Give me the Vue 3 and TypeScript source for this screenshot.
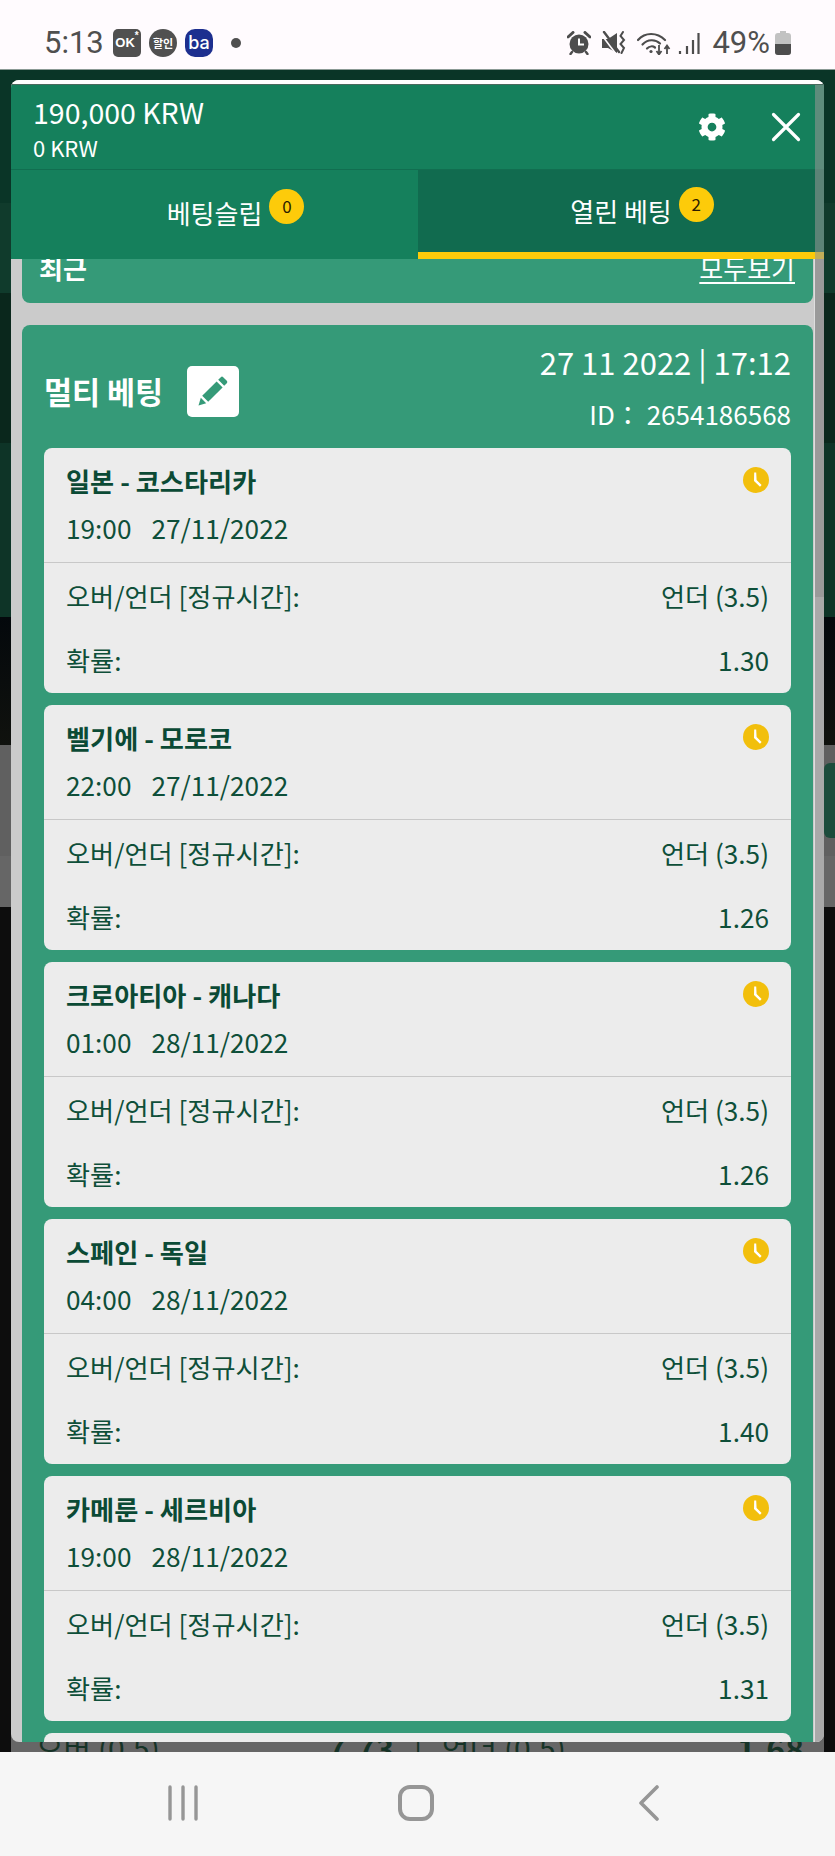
<script setup lang="ts">
interface Bet {
  match: string
  time: string
  date: string
  odds: string
}

const bets: Bet[] = [
  { match: '일본 - 코스타리카', time: '19:00', date: '27/11/2022', odds: '1.30' },
  { match: '벨기에 - 모로코', time: '22:00', date: '27/11/2022', odds: '1.26' },
  { match: '크로아티아 - 캐나다', time: '01:00', date: '28/11/2022', odds: '1.26' },
  { match: '스페인 - 독일', time: '04:00', date: '28/11/2022', odds: '1.40' },
  { match: '카메룬 - 세르비아', time: '19:00', date: '28/11/2022', odds: '1.31' },
]
</script>

<template>
  <div class="phone">
    <header class="statusbar">
      <div class="status-left">
        <span class="clock-text">5:13</span>
        <span class="app app-ok">OK<sup>*</sup></span>
        <span class="app app-sale">할인</span>
        <span class="app app-ba">ba</span>
        <span class="dot"></span>
      </div>
      <div class="status-right">
        <svg class="ic" width="24" height="24" viewBox="0 0 24 24">
          <circle cx="12" cy="13" r="9.5" fill="#4d4d4d" />
          <path d="M1 6 L6 1.5 M23 6 L18 1.5" stroke="#4d4d4d" stroke-width="3" stroke-linecap="round" />
          <path d="M5 21 L3.5 23 M19 21 L20.5 23" stroke="#4d4d4d" stroke-width="2.4" stroke-linecap="round" />
          <path d="M12 7.5 V13.5 H17" stroke="#fff" stroke-width="2" fill="none" />
        </svg>
        <svg class="ic ic-mute" width="24" height="24" viewBox="0 0 24 24">
          <path d="M0 8 H6 L15 2 V22 L6 17 H0 Z" fill="#4d4d4d" />
          <path d="M0 4.5 L14 23" stroke="#fffbfe" stroke-width="1.6" />
          <path d="M2 1 L17 21" stroke="#4d4d4d" stroke-width="2.4" stroke-linecap="round" />
          <path d="M21 1 L18.5 5 L22 9 L18.5 13 L22 17 L19.5 22" stroke="#4d4d4d" stroke-width="2" fill="none" stroke-linecap="round" />
        </svg>
        <svg class="ic ic-wifi" width="34" height="24" viewBox="0 0 34 24">
          <path d="M1 9 C8 1 20 1 28 9" stroke="#4d4d4d" stroke-width="2.2" fill="none" stroke-linecap="round" />
          <path d="M5.5 13.5 C10.5 8 18.5 8 23 12.5" stroke="#4d4d4d" stroke-width="2.2" fill="none" stroke-linecap="round" />
          <path d="M10 17.5 C12.5 15 16 15 18 16.5" stroke="#4d4d4d" stroke-width="2.2" fill="none" stroke-linecap="round" />
          <circle cx="14" cy="20.5" r="1.6" fill="#4d4d4d" />
          <path d="M22 14 V23 M19.5 20 L22 23.5 L24.5 20" stroke="#4d4d4d" stroke-width="1.8" fill="none" />
          <path d="M30 23 V15 M27.5 18 L30 14.5 L32.5 18" stroke="#4d4d4d" stroke-width="1.8" fill="none" />
        </svg>
        <svg class="ic ic-signal" width="22" height="24" viewBox="0 0 22 24">
          <path d="M2 20 V23 M9 15 V23 M15 9 V23 M20.5 2 V23" stroke="#4d4d4d" stroke-width="2.2" />
        </svg>
        <span class="battery-text">49%</span>
        <svg class="ic ic-battery" width="16" height="24" viewBox="0 0 16 24">
          <path d="M5 0 H11 V2 H13 Q16 2 16 5 V21 Q16 24 13 24 H3 Q0 24 0 21 V5 Q0 2 3 2 H5 Z" fill="#c2c2c2" />
          <path d="M0 13 H16 V21 Q16 24 13 24 H3 Q0 24 0 21 Z" fill="#4d4d4d" />
        </svg>
      </div>
    </header>

    <main class="stage">
      <div class="backdrop">
        <div class="band band-a"></div>
        <div class="band band-b"></div>
        <div class="band band-c"></div>
        <div class="band band-d"></div>
        <div class="band band-e"></div>
        <div class="band band-f"><div class="peek-block"></div></div>
        <div class="band band-g"></div>
        <div class="band band-h">
          <div class="peek-row">
            <span class="peek-l">오버 (0.5)</span>
            <b class="peek-v1">7.73</b>
            <span class="peek-sep">|</span>
            <span class="peek-r">언더 (0.5)</span>
            <b class="peek-v2">1.68</b>
          </div>
        </div>
      </div>

      <section class="panel">
        <div class="panel-edge"></div>
        <div class="wallet">
          <div class="amounts">
            <div class="amount-main">190,000 KRW</div>
            <div class="amount-sub">0 KRW</div>
          </div>
          <svg class="gear" width="28" height="28" viewBox="0 0 512 512">
            <path fill="#fff" d="M487.4 315.7l-42.6-24.6c4.3-23.2 4.3-47 0-70.2l42.6-24.6c4.9-2.8 7.1-8.6 5.5-14-11.1-35.6-30-67.8-54.7-94.6-3.8-4.1-10-5.1-14.8-2.3L380.8 110c-17.9-15.4-38.5-27.3-60.8-35.1V25.8c0-5.6-3.9-10.5-9.4-11.7-36.7-8.2-74.3-7.8-109.2 0-5.5 1.2-9.4 6.1-9.4 11.7V75c-22.2 7.9-42.8 19.8-60.8 35.1L88.7 85.5c-4.9-2.8-11-1.9-14.8 2.3-24.7 26.7-43.6 58.9-54.7 94.6-1.7 5.4.6 11.2 5.5 14L67.3 221c-4.3 23.2-4.3 47 0 70.2l-42.6 24.6c-4.9 2.8-7.1 8.6-5.5 14 11.1 35.6 30 67.8 54.7 94.6 3.8 4.1 10 5.1 14.8 2.3l42.6-24.6c17.9 15.4 38.5 27.3 60.8 35.1v49.2c0 5.6 3.9 10.5 9.4 11.7 36.7 8.2 74.3 7.8 109.2 0 5.5-1.2 9.4-6.1 9.4-11.7v-49.2c22.2-7.9 42.8-19.8 60.8-35.1l42.6 24.6c4.9 2.8 11 1.9 14.8-2.3 24.7-26.7 43.6-58.9 54.7-94.6 1.5-5.5-.7-11.3-5.6-14.1zM256 336c-44.1 0-80-35.9-80-80s35.9-80 80-80 80 35.9 80 80-35.9 80-80 80z" />
          </svg>
          <svg class="close" width="30" height="30" viewBox="0 0 30 30">
            <path d="M2.5 2.5 L27.5 27.5 M27.5 2.5 L2.5 27.5" stroke="#fff" stroke-width="3.2" stroke-linecap="round" />
          </svg>
        </div>

        <nav class="tabs">
          <div class="tab">
            <span class="tab-label">베팅슬립<span class="badge">0</span></span>
          </div>
          <div class="tab tab-active">
            <span class="tab-label">열린 베팅<span class="badge">2</span></span>
          </div>
        </nav>

        <div class="scroll">
          <div class="recent">
            <strong>최근</strong>
            <a class="all">모두보기</a>
          </div>

          <article class="multi">
            <div class="multi-head">
              <div class="multi-title">
                <h2>멀티 베팅</h2>
                <span class="edit">
                  <svg width="30" height="30" viewBox="0 0 30 30">
                    <path d="M0.5 29.5 L2.8 21.8 L8.2 27.2 Z" fill="#359a78" />
                    <path d="M4.2 19.8 L18.6 5.4 L24.6 11.4 L10.2 25.8 Z" fill="#359a78" />
                    <path d="M20.2 3.8 L22.8 1.2 Q24 0 25.2 1.2 L28.8 4.8 Q30 6 28.8 7.2 L26.2 9.8 Z" fill="#359a78" />
                  </svg>
                </span>
              </div>
              <div class="multi-meta">
                <div class="stamp">27 11 2022 | 17:12</div>
                <div class="bet-id">ID： 2654186568</div>
              </div>
            </div>

            <div class="bet-list">
              <div v-for="bet in bets" :key="bet.match" class="bet">
                <div class="bet-top">
                  <div class="bet-title">
                    <span>{{ bet.match }}</span>
                    <svg class="pending" width="26" height="26" viewBox="0 0 26 26">
                      <circle cx="13" cy="13" r="13" fill="#f2bf0c" />
                      <path d="M11.2 5.5 L13.2 5.5 L13.6 13 L18.6 18 L17 19.8 L11 14 Z" fill="#fff" />
                    </svg>
                  </div>
                  <div class="bet-when">
                    <span>{{ bet.time }}</span>
                    <span>{{ bet.date }}</span>
                  </div>
                </div>
                <div class="bet-bottom">
                  <div class="bet-row"><span>오버/언더 [정규시간]:</span><span>언더 (3.5)</span></div>
                  <div class="bet-row"><span>확률:</span><span>{{ bet.odds }}</span></div>
                </div>
              </div>
              <div class="bet"></div>
            </div>
          </article>
        </div>

        <div class="scrollbar">
          <div class="sb-glass"></div>
          <div class="sb-thumb"></div>
          <div class="sb-track"></div>
        </div>
      </section>
    </main>

    <footer class="navbar">
      <svg width="30" height="36" viewBox="0 0 30 36">
        <path d="M2 2 V34 M15 2 V34 M28 2 V34" stroke="#969696" stroke-width="3.4" stroke-linecap="round" />
      </svg>
      <svg width="36" height="36" viewBox="0 0 36 36">
        <rect x="2" y="2" width="32" height="32" rx="10" fill="none" stroke="#969696" stroke-width="4" />
      </svg>
      <svg width="22" height="36" viewBox="0 0 22 36">
        <path d="M19 2 L3 18 L19 34" fill="none" stroke="#969696" stroke-width="3.6" stroke-linecap="round" stroke-linejoin="round" />
      </svg>
    </footer>
  </div>
</template>

<style scoped>
.phone {
  width: 835px;
  height: 1856px;
  display: flex;
  flex-direction: column;
  overflow: hidden;
  font-family: "Noto Sans CJK KR", "Noto Sans", sans-serif;
}

.statusbar {
  flex: none;
  background: #fffbfe;
  border-bottom: 1px solid #8b9a95;
  display: flex;
  align-items: center;
  justify-content: space-between;
  padding: 16px 44px 0 44px;
  box-sizing: content-box;
  height: 53px;
  color: #4f4f4f;
}
.status-left,
.status-right {
  display: flex;
  align-items: center;
}
.clock-text {
  font-family: Roboto, sans-serif;
  font-size: 31px;
  line-height: 36px;
  width: 69px;
}
.app {
  width: 28px;
  height: 28px;
  margin-right: 8px;
  display: flex;
  align-items: center;
  justify-content: center;
  color: #fff;
  font-weight: 700;
}
.app-ok {
  background: #505050;
  border-radius: 5px;
  font-family: "Liberation Sans", sans-serif;
  font-size: 13px;
}
.app-ok sup {
  font-size: 10px;
  line-height: 8px;
  align-self: flex-start;
  margin-top: 3px;
}
.app-sale {
  background: #505050;
  border-radius: 50%;
  font-size: 11px;
}
.app-ba {
  background: #1d2f8f;
  border-radius: 10px;
  font-family: Inter, sans-serif;
  font-size: 18px;
  font-weight: 500;
}
.dot {
  width: 10px;
  height: 10px;
  border-radius: 50%;
  background: #4f4f4f;
  margin-left: 10px;
}
.ic {
  display: block;
}
.ic-mute {
  margin-left: 11px;
}
.ic-wifi {
  margin-left: 11px;
}
.ic-signal {
  margin-left: 7px;
}
.battery-text {
  font-family: Roboto, sans-serif;
  font-size: 31px;
  line-height: 36px;
  margin-left: 12px;
  margin-right: 5px;
}

.stage {
  flex: 1;
  position: relative;
  overflow: hidden;
}
.backdrop {
  height: 100%;
  display: flex;
  flex-direction: column;
}
.band {
  flex: none;
}
.band-a { height: 133px; background: #0a3527; }
.band-b { height: 90px; background: #103b2c; }
.band-c { height: 150px; background: #0a271c; }
.band-d { height: 174px; background: #0e3427; }
.band-e { height: 128px; background: linear-gradient(#04080c, #10120e); }
.band-f { height: 111px; background: #606060; padding-top: 18px; box-sizing: border-box; }
.band-g { height: 51px; background: #666666; }
.band-h {
  flex: 1;
  background: #0d0d0d;
  display: flex;
  flex-direction: column;
  justify-content: flex-end;
}
.peek-block {
  width: 11px;
  height: 75px;
  margin-left: auto;
  background: #1c4c3c;
  border-radius: 6px 0 0 6px;
}
.peek-row {
  margin: 0 11px;
  height: 60px;
  background: #666666;
  color: #173327;
  position: relative;
  font-size: 30px;
  line-height: 50px;
  white-space: nowrap;
  overflow: hidden;
}
.peek-row > * {
  position: absolute;
  bottom: -20px;
}
.peek-l { left: 25px; }
.peek-v1 { left: 316px; font-size: 32px; }
.peek-sep { left: 403px; }
.peek-r { left: 431px; }
.peek-v2 { left: 726px; font-size: 32px; }

.panel {
  position: absolute;
  left: 11px;
  right: 11px;
  top: 10px;
  bottom: 10px;
  display: flex;
  flex-direction: column;
  overflow: hidden;
  border-radius: 8px;
  background: #cbcbcb;
}
.panel-edge {
  height: 4px;
  background: #fff;
  border-bottom: 1px solid #4a6a5e;
  flex: none;
}
.wallet {
  height: 85px;
  flex: none;
  background: #15805c;
  display: flex;
  align-items: center;
  padding: 0 23px 0 22px;
  color: #fff;
  box-sizing: border-box;
  border-bottom: 1px solid #116e50;
}
.amounts {
  flex: 1;
}
.amount-main {
  font-size: 28.5px;
  line-height: 38px;
  margin-top: 1px;
}
.amount-sub {
  font-size: 22px;
  line-height: 30px;
  margin-top: 1px;
}
.gear {
  margin-right: 45px;
}
.tabs {
  height: 89px;
  flex: none;
  display: grid;
  grid-template-columns: 407px 406px;
  background: #15805c;
  color: #fff;
}
.tab {
  display: flex;
  align-items: center;
  justify-content: center;
  padding-bottom: 4px;
  box-sizing: border-box;
}
.tab-active {
  background: #116b4f;
  border-bottom: 7px solid #fdcb0a;
  padding-bottom: 0;
}
.tab-label {
  position: relative;
  font-size: 26px;
  line-height: 34px;
}
.badge {
  position: absolute;
  left: calc(100% + 7px);
  top: -7px;
  width: 35px;
  height: 35px;
  border-radius: 50%;
  background: #fdcb0a;
  color: #2a1c00;
  font-size: 17px;
  line-height: 33px;
  text-align: center;
}

.scroll {
  flex: 1;
  min-height: 0;
  overflow: hidden;
  padding: 0 11px;
}
.recent {
  margin-top: -30px;
  height: 74px;
  box-sizing: border-box;
  padding: 25px 18px 0 17px;
  background: #359a78;
  border-radius: 8px;
  display: flex;
  justify-content: space-between;
  color: #fff;
  font-size: 26px;
  line-height: 28px;
}
.recent strong {
  font-weight: 700;
}
.all {
  text-decoration: underline;
  text-underline-offset: 3px;
}
.multi {
  margin-top: 22px;
  padding: 0 22px;
  background: #359a78;
  border-radius: 8px;
}
.multi-head {
  height: 123px;
  display: flex;
  justify-content: space-between;
  color: #fff;
}
.multi-title {
  display: flex;
  align-items: center;
  gap: 24px;
  margin-top: 13px;
  height: 106px;
}
.multi-title h2 {
  margin: 0;
  font-size: 30.5px;
  line-height: 34px;
  font-weight: 700;
}
.edit {
  width: 52px;
  height: 51px;
  background: #fff;
  border-radius: 5px;
  display: flex;
  align-items: center;
  justify-content: center;
}
.multi-meta {
  text-align: right;
  padding-top: 14px;
}
.stamp {
  font-size: 31px;
  line-height: 46px;
}
.bet-id {
  font-size: 26px;
  line-height: 38px;
  margin-top: 10px;
}
.bet-list {
  display: flex;
  flex-direction: column;
  gap: 12px;
}
.bet {
  background: #ececec;
  border-radius: 8px;
  height: 245px;
  color: #0e4f39;
  font-size: 26.2px;
  line-height: 34px;
}
.bet-top {
  height: 115px;
  box-sizing: border-box;
  padding: 16px 22px 0 22px;
  border-bottom: 1px solid #c8c8c8;
}
.bet-title {
  display: flex;
  justify-content: space-between;
  font-weight: 700;
  color: #0b4a35;
}
.pending {
  margin-top: 3px;
}
.bet-when {
  margin-top: 13px;
  display: flex;
  gap: 20px;
}
.bet-bottom {
  padding: 16px 22px 0 22px;
  display: flex;
  flex-direction: column;
  gap: 30px;
}
.bet-row {
  display: flex;
  justify-content: space-between;
}

.scrollbar {
  position: absolute;
  top: 5px;
  right: 0;
  bottom: 0;
  width: 9px;
  display: flex;
  flex-direction: column;
}
.sb-glass {
  height: 174px;
  background: rgba(150, 150, 150, 0.57);
}
.sb-thumb {
  height: 338px;
  background: #9a9a9a;
  box-shadow: -1px 0 #dedede;
}
.sb-track {
  flex: 1;
  background: #a9a9a9;
  box-shadow: -1px 0 #dedede;
}

.navbar {
  height: 104px;
  flex: none;
  background: #f6f6f6;
  display: grid;
  grid-template-columns: 366px 234px 1fr;
  align-items: center;
}
.navbar svg:nth-child(1) { margin-left: 168px; margin-top: -3px; }
.navbar svg:nth-child(2) { margin-left: 32px; margin-top: -3px; }
.navbar svg:nth-child(3) { margin-left: 38px; margin-top: -3px; }
</style>

<style>
html,
body {
  margin: 0;
  background: #000;
}
</style>
